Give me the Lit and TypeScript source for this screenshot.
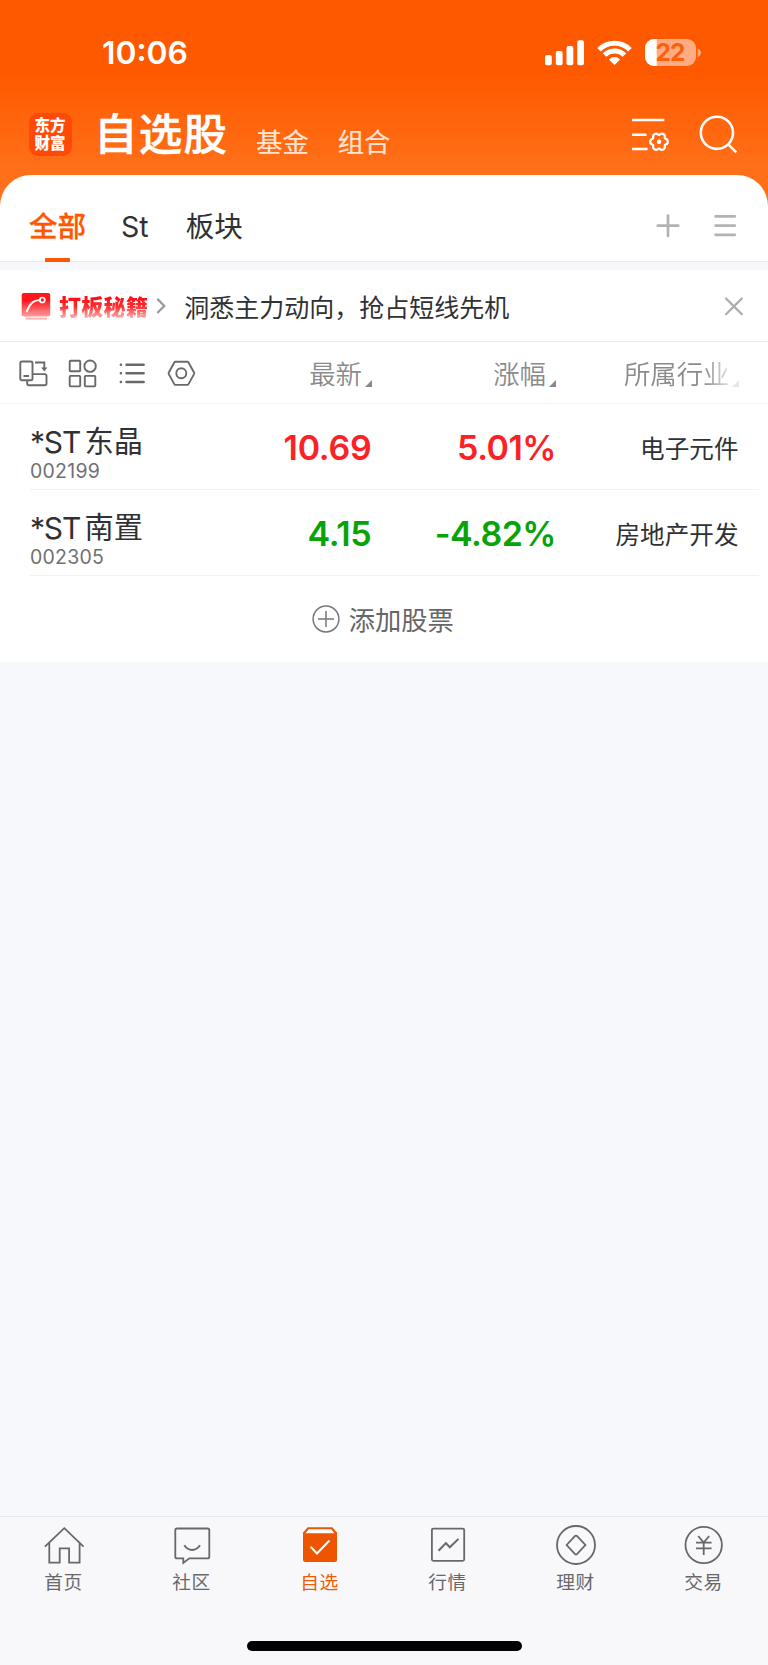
import { LitElement, html, css, svg } from "lit";
import { customElement, state } from "lit/decorators.js";
import { classMap } from "lit/directives/class-map.js";

interface Stock {
  name: string;
  code: string;
  price: string;
  change: string;
  sector: string;
}

const STOCKS: Stock[] = [
  { name: "东晶", code: "002199", price: "10.69", change: "5.01%", sector: "电子元件" },
  { name: "南置", code: "002305", price: "4.15", change: "-4.82%", sector: "房地产开发" },
];

// Outline of the six-lobed settings cog.
const cogPath = (cx: number, cy: number) => {
  const pts: string[] = [];
  for (let i = 0; i < 72; i++) {
    const a = (i / 72) * Math.PI * 2;
    const r = 8 + 0.95 * Math.cos(6 * a) - 0.2 * Math.cos(12 * a);
    pts.push(`${(cx + r * Math.cos(a)).toFixed(2)} ${(cy + r * Math.sin(a)).toFixed(2)}`);
  }
  return `M${pts.join("L")}Z`;
};

const NAV = [
  {
    label: "首页",
    icon: svg`<path d="M44.9 1546.6 64.3 1528.2 83.6 1546.6M49.3 1543v19.7h10.4v-14.4h9.4v14.4h10.5V1543"/>`,
  },
  {
    label: "社区",
    icon: svg`<path d="M177 1528.5h30.6q1.7 0 1.7 1.7v26.5q0 1.7-1.7 1.7h-18.3l-6 4.6v-4.6H177q-1.7 0-1.7-1.7v-26.5q0-1.7 1.7-1.7Z"/><path stroke-width="2" d="M184.3 1545.2c4.3 6.3 11.4 6.3 15.7 0"/>`,
  },
  {
    label: "自选",
    icon: svg`<path fill="#ee5500" stroke="none" d="M307.7 1527.3h24.6l4.7 5.3v26.9q0 2.5-2.5 2.5h-29q-2.5 0-2.5-2.5v-26.9Z"/><path fill="#fff" stroke="none" d="m308.8 1529.2-3.3 4h29l-3.3-4Z"/><path stroke="#fff" stroke-width="2" d="m310.6 1546.7 6.4 6.8 12.4-13"/>`,
  },
  {
    label: "行情",
    icon: svg`<rect x="431.9" y="1528.6" width="32.3" height="32.2" rx="1.5"/><path stroke-width="2" d="m438.5 1550.7 7.4-7.6 3.9 4.2 8.7-8.4"/>`,
  },
  {
    label: "理财",
    icon: svg`<circle cx="576" cy="1545" r="19"/><path d="m566.6 1545 8.5-9q.9-.9 1.8 0l8.5 9-8.5 9.2q-.9.9-1.8 0Z"/>`,
  },
  {
    label: "交易",
    icon: svg`<circle cx="703.7" cy="1545" r="18.2"/><path d="m698.2 1536 5.5 6.5 5.5-6.5M696 1542.6h15.6M696 1548.4h15.6M703.7 1542.5v12.5"/>`,
  },
];

@customElement("app-root")
export class AppRoot extends LitElement {
  @state() private active = 2;

  static styles = css`
    :host {
      display: flex;
      flex-direction: column;
      height: 1665px;
      box-sizing: border-box;
      background: #f7f8fb;
      font-family: "Noto Sans CJK SC", sans-serif;
      color: #303133;
      white-space: nowrap;
      overflow: hidden;
    }
    * { box-sizing: border-box; }
    svg { display: block; flex: none; fill: none; }
    .num { font-family: Inter, "Noto Sans CJK SC", sans-serif; }
    .hero {
      height: 215px;
      flex: none;
      background: linear-gradient(#ff5900 0, #ff5900 72px, #ff7019 170px, #ff7019 100%);
    }
    .status {
      height: 88px;
      padding: 17px 65px 0 102px;
      display: flex;
      justify-content: space-between;
      align-items: center;
      color: #fff;
    }
    .clock { font-size: 31.8px; font-weight: 600; line-height: 40px; }
    .battery-text { font: 700 24.5px Inter, sans-serif; fill: #ff5f0c; }
    .bar {
      height: 87px;
      display: flex;
      align-items: center;
      padding: 0 29px;
      color: #fff;
    }
    .logo {
      width: 43px;
      height: 43px;
      margin-top: 5px;
      border-radius: 9px;
      background: #ff4908;
      font-weight: 900;
      font-size: 15.5px;
      line-height: 18px;
      padding: 2px 1px 0 0;
      text-align: center;
    }
    .title { font-size: 43.5px; font-weight: 500; letter-spacing: 1.2px; line-height: 60px; margin-left: 22px; -webkit-text-stroke: .5px #fff; }
    .sub { font-size: 26.3px; line-height: 40px; margin: 19px 0 0 29px; color: #ffe3d3; -webkit-text-stroke: .2px #ffe3d3; }
    .sub.first { margin-left: 28px; }
    .push { margin-left: auto; }
    .sheet { margin-top: -40px; flex: none; background: #fff; border-radius: 31px 31px 0 0; }
    .tabs {
      height: 87px;
      display: flex;
      padding: 0 30px 0 29px;
      border-bottom: 1px solid #e9ebee;
      font-size: 28.5px;
      line-height: 99px;
    }
    .tab { height: 87px; }
    .tab.on {
      color: #ff5600;
      font-weight: 500;
      -webkit-text-stroke: .3px #ff5600;
      display: flex;
      flex-direction: column;
      align-items: center;
    }
    .tab.on::after { content: ""; width: 25px; height: 4px; margin-top: -16px; border-radius: 1px; background: #ff5600; }
    .tab.st { margin-left: 35px; font-size: 28.5px; line-height: 103px; }
    .tab.st + .tab { margin-left: 37px; }
    .tabs svg { margin-top: 30px; }
    .strip { height: 8px; background: #f6f7fa; }
    .banner { height: 71.5px; border-bottom: 1px solid #e9eaec; display: flex; align-items: center; padding: 1px 22px 0 20px; }
    .brand {
      font-size: 22px;
      font-weight: 900;
      line-height: 30px;
      letter-spacing: .3px;
      margin: -2px 0 0 7px;
      background: linear-gradient(#ff1015 30%, #ff2c30 55%, #ffaaa8 92%);
      -webkit-background-clip: text;
      background-clip: text;
      color: transparent;
    }
    .chev { margin-left: 5px; }
    .msg { font-size: 25px; line-height: 36px; margin: 1px 0 0 15px; }
    .head { height: 62.5px; border-bottom: 1px solid #f5f5f6; display: grid; grid-template-columns: 200px 172px 184px 184px; align-items: center; color: #8b8b8d; }
    .tools { padding: 1.5px 0 0 18px; }
    .col { display: flex; justify-content: flex-end; align-items: flex-end; font-size: 26.4px; font-weight: 350; line-height: 40px; gap: 3px; margin-top: 1px; }
    .col::after { content: ""; margin-bottom: 6px; border-left: 7px solid transparent; border-bottom: 7px solid #87888c; }
    .col.fade { gap: 2.5px; padding-right: 1px; -webkit-mask-image: linear-gradient(90deg, #000 80%, rgba(0,0,0,.2) 95%); mask-image: linear-gradient(90deg, #000 80%, rgba(0,0,0,.2) 95%); }
    .row { height: 86px; margin: 0 9px 0 30px; border-bottom: 1px solid #f2f2f3; display: grid; grid-template-columns: 170px 171.5px 184.5px 182.5px; }
    .name { font-size: 30px; letter-spacing: -1.2px; line-height: 40px; padding: 18.5px 0 0 0; display: flex; align-items: center; gap: 4.5px; height: 58px; }
    .cn { font-size: 29.2px; letter-spacing: 0; line-height: 40px; margin-top: -1px; }
    .code { font-size: 19.5px; letter-spacing: .25px; line-height: 20px; color: #707072; margin-top: -1px; }
    .value { font-size: 34px; line-height: 88px; height: 85px; letter-spacing: -.25px; font-weight: 600; text-align: right; color: #fb2225; }
    .value.down { color: #07a307; }
    .value.pct { letter-spacing: -.5px; }
    .sector { font-size: 24.6px; line-height: 87.5px; height: 85px; text-align: right; }
    .add { height: 85.5px; display: flex; align-items: center; justify-content: center; gap: 8.5px; color: #666668; font-size: 26.3px; padding: 0 2px 0 0; }
    .add span { margin-top: -1px; }
    .space { flex: 1; }
    .nav { height: 149px; flex: none; border-top: 1px solid #e6ecee; display: grid; grid-template-columns: repeat(6, 128px); align-content: start; background: #f8f8fb; }
    .item { display: flex; flex-direction: column; align-items: center; color: #68686b; font-size: 18.7px; line-height: 26px; padding: 6px 1px 0 0; letter-spacing: .5px; }
    .item svg { stroke: currentColor; stroke-width: 1.8; margin-left: 1px; }
    .item span { margin-top: 1px; }
    .item.on { color: #f45a05; }
    .home { position: absolute; left: 246.5px; top: 1641px; width: 275px; height: 9.5px; border-radius: 5px; background: #000; }
  `;

  render() {
    return html`
      <header class="hero">
        <div class="status">
          <span class="clock num">10:06</span>
          <svg width="160" height="40" viewBox="543 32 160 40">
            <g fill="#fff">
              <rect x="545" y="54" width="6.8" height="10.2" rx="2"/>
              <rect x="555.8" y="50" width="6.8" height="14.2" rx="2"/>
              <rect x="566.5" y="45" width="6.8" height="19.2" rx="2"/>
              <rect x="577.2" y="39.3" width="6.8" height="24.9" rx="2"/>
              <path d="M614.5 64 608.9 58.4Q614.5 53.5 620.1 58.4Z"/>
              <path stroke="#fff" stroke-width="5" fill="none" d="M604.5 54.1a14.2 14.2 0 0 1 20 0M599 48.7a22 22 0 0 1 31 0"/>
              <rect x="645" y="38" width="51" height="27" rx="9" fill="#ffac82"/>
              <path d="M656.7 38H654a9 9 0 0 0-9 9v9a9 9 0 0 0 9 9h2.7Z"/>
              <path fill="#ffac82" d="M697.6 47.5q3.3 1.3 3.3 4.2t-3.3 4.2Z"/>
            </g>
            <text class="battery-text" x="655.5" y="60" textLength="30">22</text>
          </svg>
        </div>
        <div class="bar">
          <div class="logo">东方<br />财富</div>
          <div class="title">自选股</div>
          <div class="sub first">基金</div>
          <div class="sub">组合</div>
          <svg class="push" width="109" height="50" viewBox="630 106.5 109 50" stroke="#fff" stroke-width="2.6">
            <path d="M632 119.5h32.3M632 134.3h14.5M632 148.5h15.5"/>
            <path stroke-width="2.3" stroke-linejoin="round" d="${cogPath(659, 141.2)}"/>
            <circle cx="659" cy="141.2" r="2.3" fill="#fff" stroke="none"/>
            <circle cx="716.9" cy="132.3" r="16.1"/>
            <path d="m728 143.6 8.3 8.2"/>
          </svg>
        </div>
      </header>
      <main class="sheet">
        <div class="tabs">
          <div class="tab on">全部</div>
          <div class="tab st num">St</div>
          <div class="tab">板块</div>
          <svg class="push" width="84" height="40" viewBox="654 205 84 40" stroke="#b3b3b3" stroke-width="2.7" stroke-linecap="round">
            <path d="M657.8 225.7h20.4M668 215.5v20.4M715.6 216.4h19.2M715.6 225.6h19.2M715.6 234.8h19.2"/>
          </svg>
        </div>
        <div class="strip"></div>
        <div class="banner">
          <svg width="32" height="30" viewBox="20 291 32 30">
            <defs>
              <linearGradient id="g" x1="0" y1="0" x2="0" y2="1">
                <stop offset=".3" stop-color="#ff151a"/><stop offset="1" stop-color="#ff9c9d"/>
              </linearGradient>
            </defs>
            <rect x="21.7" y="293" width="28.5" height="23.5" rx="2" fill="url(#g)"/>
            <path stroke="#ffb3b3" stroke-width="2" d="M25.5 318.6h21.5"/>
            <path stroke="#fff" stroke-width="2" stroke-linecap="round" d="M26.8 311.3q3-7.5 6.5-9.5t6.5-1.5"/>
            <circle cx="42.3" cy="300" r="2.5" stroke="#fff" stroke-width="1.7"/>
          </svg>
          <span class="brand">打板秘籍</span>
          <svg class="chev" width="16" height="20" viewBox="153 297 16 20" stroke="#98989b" stroke-width="2.2"><path d="m157.3 299.7 7 7.2-7 7.2"/></svg>
          <span class="msg">洞悉主力动向，抢占短线先机</span>
          <svg class="push" width="24" height="24" viewBox="722.5 294.5 24 24" stroke="#adadaf" stroke-width="2.3" stroke-linecap="round"><path d="m726.5 299 15.8 15.8m0-15.8-15.8 15.8"/></svg>
        </div>
        <div class="head">
          <div class="tools">
            <svg width="180" height="32" viewBox="18 357 180 32" stroke="#69696c" stroke-width="1.9">
              <rect x="20.3" y="361.5" width="12.2" height="18.8" rx="1.8"/>
              <path d="M23.5 376h5.5M35 362.5h9.3v7M27.2 381v2.5q0 1.8 1.8 1.8h15.7q1.8 0 1.8-1.8v-7.6q0-1.8-1.8-1.8H33"/>
              <path fill="#69696c" stroke="none" d="M41.2 367.5h6.2l-3.1 4Z"/>
              <rect x="69.7" y="360.8" width="10.5" height="10.5" rx=".8"/>
              <circle cx="90.1" cy="366.2" r="5.7"/>
              <rect x="69.7" y="375.9" width="10.5" height="10.5" rx=".8"/>
              <rect x="84.8" y="375.9" width="10.5" height="10.5" rx=".8"/>
              <path stroke-width="2.4" stroke-linecap="round" d="M126.5 364.7h17.2M126.5 373.3h17.2M126.5 382h17.2M120.8 364.7h.2M120.8 373.3h.2M120.8 382h.2"/>
              <path stroke-linejoin="round" d="M175.5 361.7h11.8q.8 0 1.2.8l5.5 10q.4.8 0 1.6l-5.5 10q-.4.8-1.2.8h-11.8q-.8 0-1.2-.8l-5.5-10q-.4-.8 0-1.6l5.5-10q.4-.8 1.2-.8Z"/>
              <circle cx="181.3" cy="373.3" r="5"/>
            </svg>
          </div>
          <div class="col">最新</div>
          <div class="col">涨幅</div>
          <div class="col fade">所属行业</div>
        </div>
        ${STOCKS.map((s) => {
          const down = s.change.startsWith("-");
          return html`<div class="row">
            <div>
              <div class="name num">*ST<span class="cn">${s.name}</span></div>
              <div class="code num">${s.code}</div>
            </div>
            <div class=${classMap({ value: true, num: true, down })}>${s.price}</div>
            <div class=${classMap({ value: true, num: true, pct: true, down })}>${s.change}</div>
            <div class="sector">${s.sector}</div>
          </div>`;
        })}
        <div class="add">
          <svg width="28" height="28" viewBox="0 0 28 28" stroke="#77777c" stroke-width="1.5"><circle cx="14" cy="14" r="12.9"/><path d="M6 14h16M14 6v16"/></svg>
          <span>添加股票</span>
        </div>
      </main>
      <div class="space"></div>
      <nav class="nav">
        ${NAV.map(
          (n, i) => html`<div class=${classMap({ item: true, on: i === this.active })} @click=${() => (this.active = i)}>
            <svg width="44" height="44" viewBox="${42 + i * 128} 1523 44 44">${n.icon}</svg>
            <span>${n.label}</span>
          </div>`
        )}
      </nav>
      <div class="home"></div>
    `;
  }
}
